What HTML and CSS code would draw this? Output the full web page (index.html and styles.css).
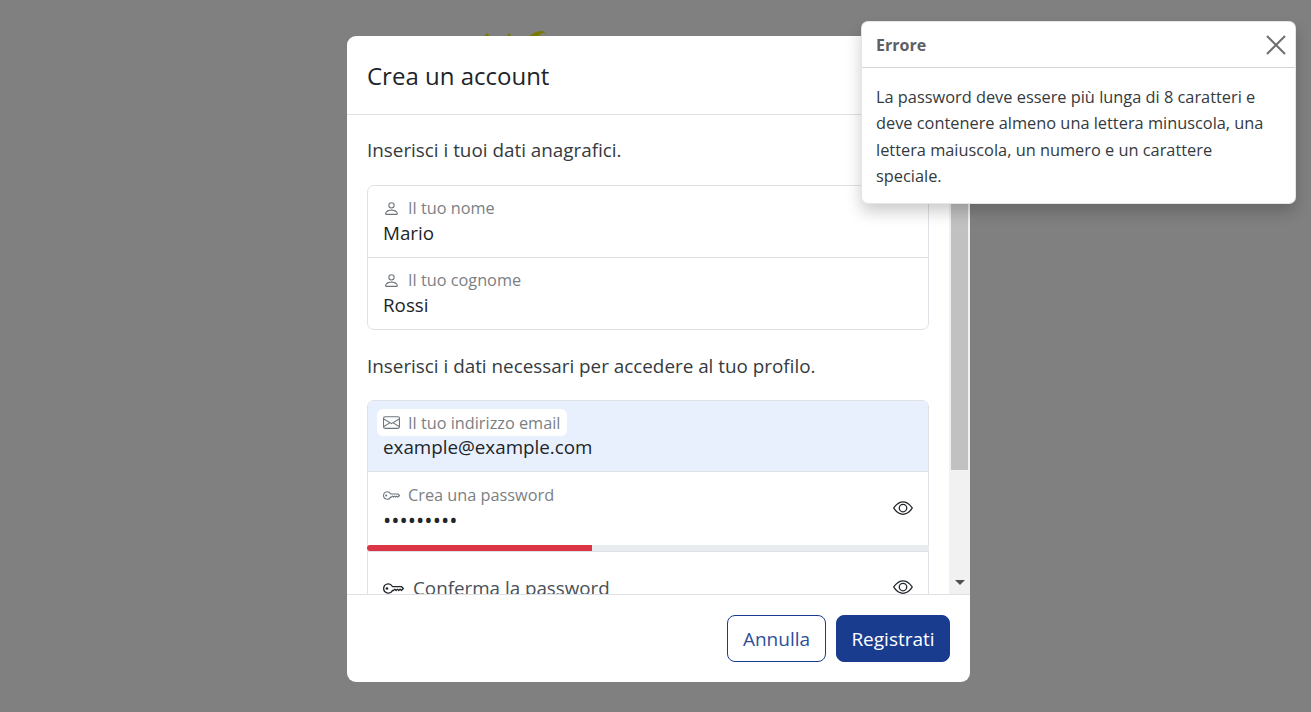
FILE: index.html
```html
<!DOCTYPE html>
<html lang="it">
<head>
    <meta charset="UTF-8">
    <title>Crea un account</title>
    <link rel="stylesheet" href="styles.css">
</head>
<body>
    <svg class="icon-defs" aria-hidden="true">
        <symbol id="i-person" viewBox="0 0 16 16"><path d="M8 8a3 3 0 1 0 0-6 3 3 0 0 0 0 6Zm2-3a2 2 0 1 1-4 0 2 2 0 0 1 4 0Zm4 8c0 1-1 1-1 1H3s-1 0-1-1 1-4 6-4 6 3 6 4Zm-1-.004c-.001-.246-.154-.986-.832-1.664C11.516 10.68 10.289 10 8 10c-2.29 0-3.516.68-4.168 1.332-.678.678-.83 1.418-.832 1.664h10Z"/></symbol>
        <symbol id="i-envelope" viewBox="0 0 16 16"><path d="M0 4a2 2 0 0 1 2-2h12a2 2 0 0 1 2 2v8a2 2 0 0 1-2 2H2a2 2 0 0 1-2-2V4Zm2-1a1 1 0 0 0-1 1v.217l7 4.2 7-4.2V4a1 1 0 0 0-1-1H2Zm13 2.383-4.708 2.825L15 11.105V5.383Zm-.034 6.876-5.64-3.471L8 9.583l-1.326-.795-5.64 3.47A1 1 0 0 0 2 13h12a1 1 0 0 0 .966-.741ZM1 11.105l4.708-2.897L1 5.383v5.722Z"/></symbol>
        <symbol id="i-key" viewBox="0 0 16 16"><path d="M0 8a4 4 0 0 1 7.465-2H14a.5.5 0 0 1 .354.146l1.5 1.5a.5.5 0 0 1 0 .708l-1.5 1.5a.5.5 0 0 1-.708 0L13 9.207l-.646.647a.5.5 0 0 1-.708 0L11 9.207l-.646.647a.5.5 0 0 1-.708 0L9 9.207l-.646.647A.5.5 0 0 1 8 10h-.535A4 4 0 0 1 0 8zm4-3a3 3 0 1 0 2.712 4.285A.5.5 0 0 1 7.163 9h.63l.853-.854a.5.5 0 0 1 .708 0l.646.647.646-.647a.5.5 0 0 1 .708 0l.646.647.646-.647a.5.5 0 0 1 .708 0l.646.647.793-.793-1-1h-6.63a.5.5 0 0 1-.451-.285A3 3 0 0 0 4 5z"/><path d="M4 8a1 1 0 1 1-2 0 1 1 0 0 1 2 0z"/></symbol>
        <symbol id="i-eye" viewBox="0 0 16 16"><path d="M16 8s-3-5.5-8-5.5S0 8 0 8s3 5.5 8 5.5S16 8 16 8zM1.173 8a13.133 13.133 0 0 1 1.66-2.043C4.12 4.668 5.88 3.5 8 3.5c2.12 0 3.879 1.168 5.168 2.457A13.133 13.133 0 0 1 14.828 8c-.058.087-.122.183-.195.288-.335.48-.83 1.12-1.465 1.755C11.879 11.332 10.119 12.5 8 12.5c-2.12 0-3.879-1.168-5.168-2.457A13.134 13.134 0 0 1 1.172 8z"/><path d="M8 5.5a2.5 2.5 0 1 0 0 5 2.5 2.5 0 0 0 0-5zM4.5 8a3.5 3.5 0 1 1 7 0 3.5 3.5 0 0 1-7 0z"/></symbol>
    </svg>

    <!-- logo of the page behind the backdrop, only its top shows above the modal -->
    <svg class="logo-bits" width="70" height="12" viewBox="0 0 70 12" aria-hidden="true">
        <path d="M0 10 C2 8 4 6 5 5 C6 6 8 8 10 10Z"/>
        <path d="M23 10 C25 8 26 6 27 5 C28 6 29 8 31 10Z"/>
        <path d="M46 10 C49 6 54 3 60 3 C62 3 63 4 63 5 C59 5 57 7 56 10Z"/>
    </svg>

    <div class="modal">
        <header class="modal-header">
            <h1>Crea un account</h1>
        </header>
        <div class="modal-main">
            <div class="modal-body">
                <p>Inserisci i tuoi dati anagrafici.</p>
                <div class="field-group">
                    <div class="field">
                        <label><svg class="icon"><use href="#i-person"/></svg>Il tuo nome</label>
                        <input type="text" value="Mario">
                    </div>
                    <div class="field">
                        <label><svg class="icon"><use href="#i-person"/></svg>Il tuo cognome</label>
                        <input type="text" value="Rossi">
                    </div>
                </div>
                <p class="second">Inserisci i dati necessari per accedere al tuo profilo.</p>
                <div class="field-group">
                    <div class="field autofill">
                        <label><svg class="icon"><use href="#i-envelope"/></svg>Il tuo indirizzo email</label>
                        <input type="text" value="example@example.com">
                    </div>
                    <div class="field with-eye">
                        <label><svg class="icon"><use href="#i-key"/></svg>Crea una password</label>
                        <input class="pass" type="password" value="123456789">
                        <svg class="eye"><use href="#i-eye"/></svg>
                    </div>
                    <div class="strength"><div class="strength-bar"></div></div>
                    <div class="field with-eye empty">
                        <label><svg class="icon"><use href="#i-key"/></svg>Conferma la password</label>
                        <svg class="eye"><use href="#i-eye"/></svg>
                    </div>
                </div>
            </div>
            <div class="scrollbar">
                <div class="scroll-btn"></div>
                <div class="scroll-thumb"></div>
                <div class="scroll-btn"><span class="arrow-down"></span></div>
            </div>
        </div>
        <footer class="modal-footer">
            <button class="btn btn-outline">Annulla</button>
            <button class="btn btn-primary">Registrati</button>
        </footer>
    </div>

    <div class="toast">
        <div class="toast-header">
            <strong>Errore</strong>
            <svg class="toast-close" width="20" height="20" viewBox="0 0 20 20"><path d="M1 1 L19 19 M19 1 L1 19"/></svg>
        </div>
        <div class="toast-body">La password deve essere più lunga di 8 caratteri e deve contenere almeno una lettera minuscola, una lettera maiuscola, un numero e un carattere speciale.</div>
    </div>
</body>
</html>
```

FILE: styles.css
```css
*{
    box-sizing: border-box;
}
html, body{
    height: 100%;
}
body{
    margin: 0;
    background-color: #808080;
    font-family: "Open Sans", "Noto Sans", sans-serif;
    color: #212529;
    overflow: hidden;
}
.icon-defs{
    display: none;
}
.logo-bits{
    position: absolute;
    left: 482px;
    top: 28px;
    fill: #7a7a00;
}
.modal{
    position: relative;
    display: flex;
    flex-direction: column;
    width: 623px;
    height: 646px;
    margin: 36px 0 0 347px;
    background: #fff;
    border-radius: 9px;
    overflow: hidden;
}
.modal-header{
    flex: none;
    height: 79px;
    padding: 0 20px 0 20px;
    display: flex;
    align-items: center;
    border-bottom: 1px solid #dee2e6;
}
.modal-header h1{
    margin: 0;
    font-size: 24px;
    font-weight: 500;
}
.modal-main{
    flex: 1;
    min-height: 0;
    display: flex;
}
.modal-body{
    flex: 1;
    min-width: 0;
    padding: 20px 20px 20px 20px;
    overflow: hidden;
}
.scrollbar{
    flex: none;
    width: 21px;
    display: flex;
    flex-direction: column;
    padding: 0 2px 0 2px;
    background: #f1f1f1;
}
.scroll-btn{
    flex: none;
    height: 17px;
    display: flex;
    justify-content: center;
    align-items: center;
}
.scroll-thumb{
    flex: none;
    height: 338px;
    margin-bottom: auto;
    background: #c1c1c1;
}
.arrow-down{
    width: 0;
    height: 0;
    margin-bottom: 6px;
    border-left: 5px solid transparent;
    border-right: 5px solid transparent;
    border-top: 5px solid #505050;
}
.modal-body p{
    margin: 0 0 20px 0;
    font-size: 18.85px;
    line-height: 30px;
    color: #343a40;
}
.modal-body p.second{
    margin: 21px 0 19px 0;
}
.field-group{
    width: 562px;
    border: 1px solid #dee2e6;
    border-radius: 7px;
}
.field{
    position: relative;
    height: 72px;
    padding: 11px 15px 0 15px;
    border-top: 1px solid #dee2e6;
}
.field:first-child{
    border-top: none;
    height: 71px;
}
.field label{
    display: flex;
    align-items: center;
    height: 22px;
    font-size: 16.3px;
    color: #7b7f84;
}
.field .icon{
    width: 17px;
    height: 17px;
    margin-right: 8px;
    fill: #6c757d;
}
.field input{
    display: block;
    width: 100%;
    height: 28px;
    padding: 0;
    border: none;
    outline: none;
    background: transparent;
    font-family: inherit;
    font-size: 18.8px;
    color: #212529;
}
.field:first-child.autofill{
    height: 70px;
    background: #e8f0fe;
    border-radius: 6px 6px 0 0;
}
.autofill label{
    width: 190px;
    height: 27px;
    margin: -3px 0 -3px -6px;
    padding-left: 6px;
    background: #fff;
    border-radius: 6px;
}
.autofill input{
    position: relative;
}
.with-eye{
    height: 74px;
    padding-top: 12px;
}
.field input.pass{
    height: 26px;
    font-size: 22px;
}
.eye{
    position: absolute;
    right: 15px;
    top: 26px;
    width: 20px;
    height: 20px;
    fill: #212529;
}
.empty{
    padding-top: 25px;
}
.empty .eye{
    top: 25px;
}
.empty label{
    font-size: 18.8px;
    color: #495057;
}
.field.empty .icon{
    width: 21px;
    height: 21px;
    margin-right: 9px;
    fill: #212529;
}
.strength{
    height: 6px;
    margin: 0 -1px;
    background: #e9ecef;
}
.strength-bar{
    width: 40%;
    height: 100%;
    background: #dc3545;
    border-radius: 3px 0 0 3px;
}
.modal-footer{
    flex: none;
    height: 88px;
    padding: 20px 20px 0 0;
    display: flex;
    justify-content: flex-end;
    gap: 10px;
    border-top: 1px solid #dee2e6;
}
.btn{
    height: 47px;
    border-radius: 8px;
    font-family: inherit;
    font-size: 19px;
    border: 1px solid #1a3c8f;
}
.btn-outline{
    width: 99px;
    background: #fff;
    color: #2f4f9a;
}
.btn-primary{
    width: 114px;
    background: #1a3c8f;
    color: #fff;
}
.toast{
    position: absolute;
    left: 861px;
    top: 21px;
    width: 435px;
    background: #fff;
    border: 1px solid rgba(0,0,0,0.1);
    border-radius: 7px;
    box-shadow: 0 8px 16px rgba(0,0,0,0.2);
}
.toast-header{
    display: flex;
    justify-content: space-between;
    align-items: center;
    height: 46px;
    padding: 0 9px 0 14px;
    border-bottom: 1px solid #d5d5d5;
    font-size: 16px;
    color: #5c6066;
}
.toast-close{
    stroke: #6f6f6f;
    stroke-width: 2;
    fill: none;
}
.toast-body{
    padding: 16px 16px 13px 14px;
    font-size: 16.35px;
    line-height: 26.4px;
    color: #343a40;
}
```
